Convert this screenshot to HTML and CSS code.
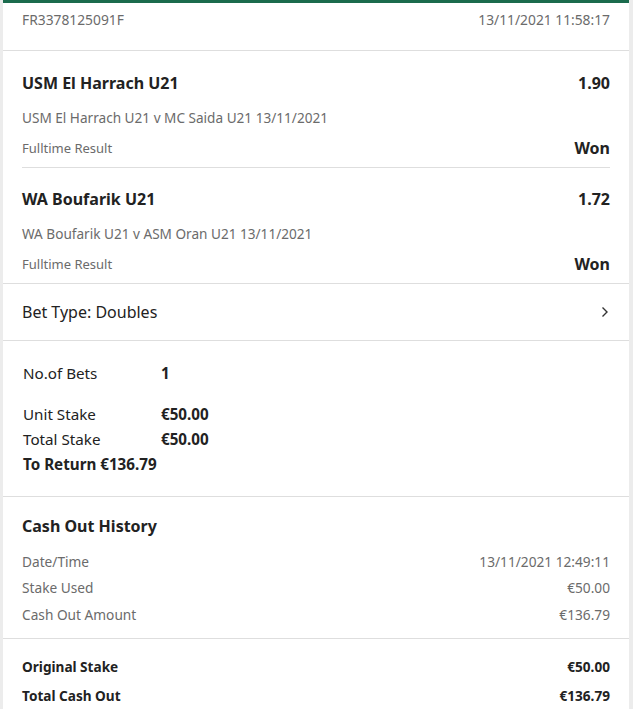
FILE: index.html
```html
<!DOCTYPE html>
<html>
<head>
<title>Bet Receipt</title>
<link rel="stylesheet" href="styles.css">
</head>
<body>

<div class="receipt">

	<div class="head">
		<span>FR3378125091F</span>
		<span>13/11/2021 11:58:17</span>
	</div>

	<div class="selections">
		<div class="selection">
			<div class="line title"><span>USM El Harrach U21</span><span>1.90</span></div>
			<div class="line event">USM El Harrach U21 v MC Saida U21 13/11/2021</div>
			<div class="line market"><span>Fulltime Result</span><span class="result">Won</span></div>
		</div>
		<div class="selection">
			<div class="line title"><span>WA Boufarik U21</span><span>1.72</span></div>
			<div class="line event">WA Boufarik U21 v ASM Oran U21 13/11/2021</div>
			<div class="line market"><span>Fulltime Result</span><span class="result">Won</span></div>
		</div>
	</div>

	<div class="bet-type">
		<span>Bet Type: Doubles</span>
		<svg width="8" height="12" viewBox="0 0 8 12"><path d="M1.5 1.5 L6 6 L1.5 10.5" fill="none" stroke="#333" stroke-width="1.4"/></svg>
	</div>

	<div class="stakes">
		<div class="stake bets"><span class="label">No.of Bets</span><b>1</b></div>
		<div class="stake"><span class="label">Unit Stake</span><b>€50.00</b></div>
		<div class="stake"><span class="label">Total Stake</span><b>€50.00</b></div>
		<div class="stake"><b>To Return €136.79</b></div>
	</div>

	<div class="history">
		<h2>Cash Out History</h2>
		<div class="line"><span>Date/Time</span><span>13/11/2021 12:49:11</span></div>
		<div class="line"><span>Stake Used</span><span>€50.00</span></div>
		<div class="line"><span>Cash Out Amount</span><span>€136.79</span></div>
	</div>

	<div class="totals">
		<div class="line"><span>Original Stake</span><span>€50.00</span></div>
		<div class="line"><span>Total Cash Out</span><span>€136.79</span></div>
	</div>

</div>

</body>
</html>
```

FILE: styles.css
```css
body {
	margin: 0;
	background-color: #ececec;
	font-family: "Noto Sans", "Open Sans", sans-serif;
	color: #222;
}

.receipt {
	margin: 0 4px 0 3px;
	background-color: #fff;
	border-top: 3px solid #1b6b4d;
	height: 706px;
}

.line {
	display: flex;
	justify-content: space-between;
	align-items: center;
}

.head {
	display: flex;
	justify-content: space-between;
	padding: 0 19px;
	height: 47px;
	line-height: 34px;
	font-size: 13.8px;
	color: #6b6b6b;
	border-bottom: 1px solid #dedede;
}

.selections {
	padding: 0 19px;
	border-bottom: 1px solid #dedede;
}

.selection {
	padding: 12px 0 2px;
}

.selection + .selection {
	padding-top: 11px;
	border-top: 1px solid #dedede;
}

.title {
	font-size: 16px;
	font-weight: bold;
	height: 40px;
}

.event, .market {
	font-size: 13px;
	color: #6b6b6b;
}

.event {
	font-size: 13.6px;
	height: 28px;
}

.market {
	height: 34px;
}

.result {
	font-size: 16px;
	font-weight: bold;
	color: #222;
}

.bet-type {
	display: flex;
	justify-content: space-between;
	align-items: center;
	padding: 0 20px 0 19px;
	height: 56px;
	font-size: 16px;
	border-bottom: 1px solid #dedede;
}

.stakes {
	padding: 19px 20px 20px;
	font-size: 15.2px;
	border-bottom: 1px solid #dedede;
}

.stake {
	display: flex;
	height: 25px;
	align-items: center;
}

.stake.bets {
	margin-bottom: 16px;
}

.stake .label {
	width: 138px;
}

.history {
	padding: 14px 19px 10.5px;
	font-size: 13.7px;
	color: #6b6b6b;
	border-bottom: 1px solid #dedede;
}

.history h2 {
	margin: 0 0 7px;
	font-size: 16px;
	color: #222;
	line-height: 30px;
}

.history .line {
	height: 26.5px;
}

.totals {
	padding: 13px 19px;
	font-size: 13.6px;
	font-weight: bold;
}

.totals .line {
	height: 29px;
}
```
